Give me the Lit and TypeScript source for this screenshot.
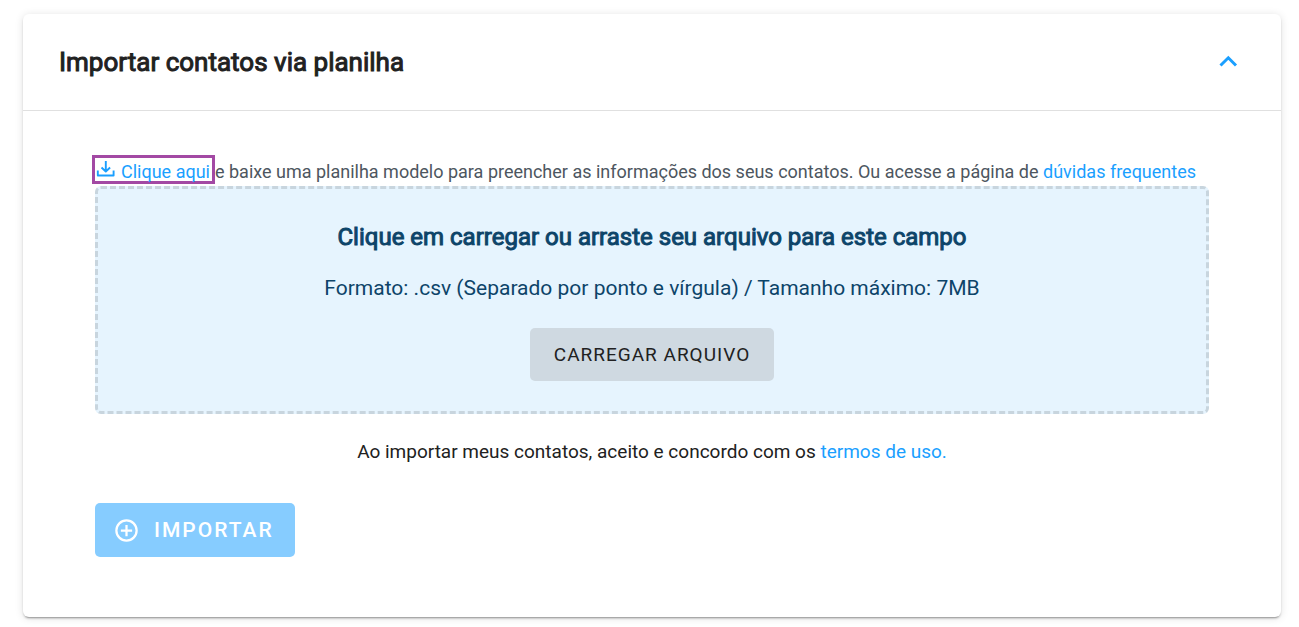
import { LitElement, html, css } from "lit";
import { customElement } from "lit/decorators.js";

@customElement("app-root")
export class AppRoot extends LitElement {
  static styles = css`
    :host { display: block; font-family: Roboto, sans-serif; color: #212121; }
    * { box-sizing: border-box; }
    .page { padding: 14px 18px 10px 23px; }
    .card { background: #fff; border-radius: 6px; box-shadow: 0 3px 1px -2px rgba(0,0,0,.2), 0 2px 2px rgba(0,0,0,.14), 0 1px 8px rgba(0,0,0,.12); }
    .head { display: flex; align-items: center; justify-content: space-between; min-height: 97px; padding: 0 36px; border-bottom: 1px solid #e0e0e0; }
    h2, h3 { margin: 0; line-height: 32px; font-weight: 400; -webkit-text-stroke: 1px currentColor; }
    h2 { font-size: 26px; }
    h3 { font-size: 24px; }
    .toggle { border: 0; background: none; padding: 0; width: 34px; height: 34px; }
    .toggle svg, .mark svg, .import svg { display: block; }
    .body { padding: 44px 72px 60px; }
    .intro { display: flex; align-items: flex-end; margin: 0 0 2px -3px; font-size: 18px; line-height: 24px; color: #4d5660; white-space: nowrap; }
    a { color: #1a9fff; text-decoration: none; }
    .mark { display: flex; align-items: flex-start; gap: 6px; height: 29px; padding: 2px 2px 0 1px; border: 3px solid #a349a4; line-height: 23px; }
    .drop { display: flex; flex-direction: column; align-items: center; padding: 32px 0 30px; background: #e6f4fe; border: 3px dashed #c8d5de; border-radius: 6px; color: #0d4469; }
    .format { margin: 21px 0 26px; font-size: 21px; line-height: 28px; }
    .load { height: 53px; padding: 0 24px; border: 0; border-radius: 5px; background: #cfd9e1; color: #212121; font: 400 19px Roboto, sans-serif; letter-spacing: 1px; }
    .terms { margin: 24px 0 37px; text-align: center; font-size: 19px; line-height: 28px; }
    .import { display: flex; align-items: center; gap: 14px; height: 54px; padding: 0 21px 0 18px; border: 0; border-radius: 5px; background: #86ccff; color: #fff; font: 500 21px Roboto, sans-serif; letter-spacing: 2px; }
  `;

  render() {
    return html`
      <main class="page">
        <section class="card">
          <header class="head">
            <h2>Importar contatos via planilha</h2>
            <button class="toggle" aria-label="Recolher" aria-expanded="true">
              <svg width="34" height="34" viewBox="0 0 34 34" fill="none" stroke="#1a9fff" stroke-width="3"><path d="M9.500 20.500 17.300 12.800 25 20.500" /></svg>
            </button>
          </header>
          <div class="body">
            <p class="intro">
              <a class="mark" href="#modelo"><svg width="19" height="18" viewBox="0 0 19 18" fill="none" stroke="#1a9fff" stroke-width="1.900"><path d="M9.800 1v10.500M5.500 7.500l4.300 4 4.300-4M1.800 10.500v5h15.800v-5" stroke-linejoin="round" /></svg>Clique aqui</a>
              <span>e baixe uma planilha modelo para preencher as informações dos seus contatos. Ou acesse a página de <a href="#duvidas">dúvidas frequentes</a></span>
            </p>
            <div class="drop">
              <h3>Clique em carregar ou arraste seu arquivo para este campo</h3>
              <p class="format">Formato: .csv (Separado por ponto e vírgula) / Tamanho máximo: 7MB</p>
              <button class="load">CARREGAR ARQUIVO</button>
            </div>
            <p class="terms">Ao importar meus contatos, aceito e concordo com os <a href="#termos">termos de uso.</a></p>
            <button class="import"><svg width="27" height="27" viewBox="0 0 24 24" fill="#fff"><path d="M13 7h-2v4H7v2h4v4h2v-4h4v-2h-4V7zm-1-5a10 10 0 1 0 0 20 10 10 0 0 0 0-20zm0 18a8 8 0 1 1 0-16 8 8 0 0 1 0 16z" /></svg>IMPORTAR</button>
          </div>
        </section>
      </main>
    `;
  }
}
